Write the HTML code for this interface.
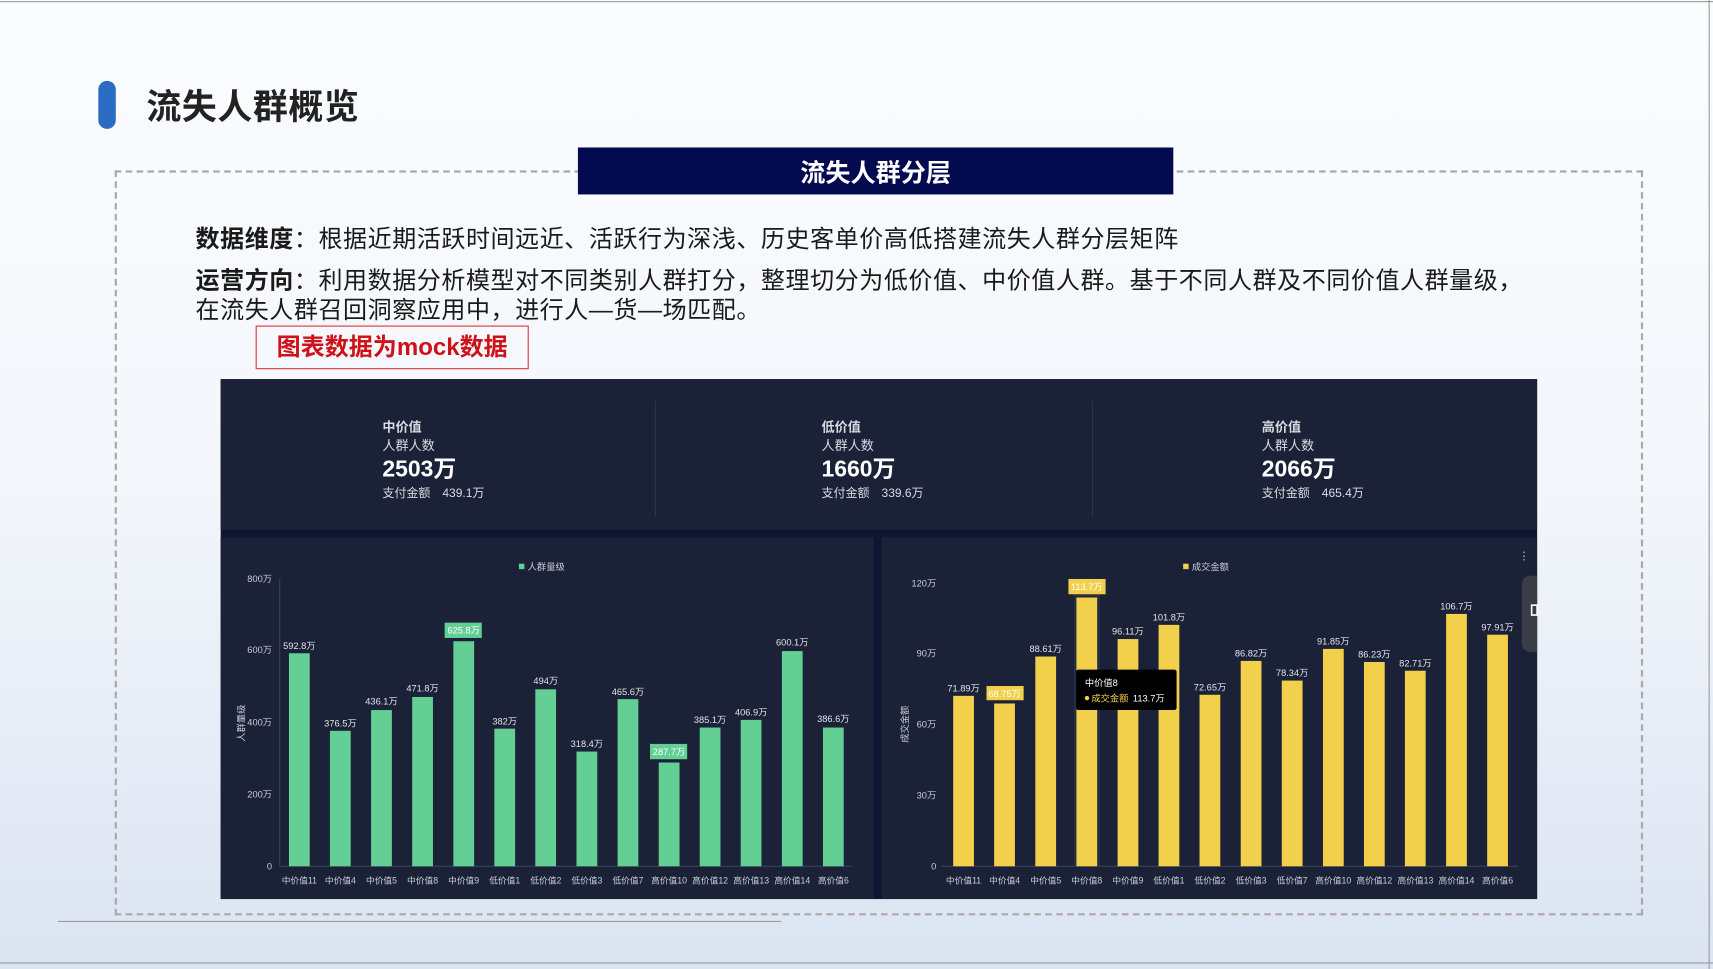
<!DOCTYPE html>
<html><head><meta charset="utf-8"><style>
html,body{margin:0;padding:0;width:1713px;height:969px;overflow:hidden;background:#fff}
#w{position:absolute;left:0;top:0;width:1568px;height:887px;transform:scale(1.09247,1.0924);transform-origin:0 0;
background:linear-gradient(#fbfcfe 0%,#f3f6fb 50%,#dbe4f2 100%);font-family:"Liberation Sans","Noto Sans CJK SC",sans-serif;overflow:hidden}
.a{position:absolute}
.t{font-size:22px;color:#1a1a1a;letter-spacing:0.5px;white-space:nowrap}
</style></head><body><div id="w">
<div class="a" style="left:0;top:1px;width:1568px;height:1px;background:#9a9a9a"></div>
<div class="a" style="left:1564px;top:0;width:1px;height:887px;background:#9a9a9a"></div>
<div class="a" style="left:0;top:881px;width:1568px;height:1px;background:#9a9a9a"></div>
<div class="a" style="left:90px;top:74px;width:16px;height:44px;border-radius:8px;background:#2a6cc4"></div>
<div class="a" style="left:134px;top:73px;font-size:32px;font-weight:bold;color:#222;letter-spacing:0.5px">流失人群概览</div>
<div class="a" style="left:105px;top:156px;width:1395px;height:678px;border:2px dashed #a9a9a9"></div>
<div class="a" style="left:529px;top:135px;width:545px;height:43px;background:#030a50;color:#fff;font-size:23px;font-weight:bold;text-align:center;line-height:46px">流失人群分层</div>
<div class="a t" style="left:179px;top:201px"><b>数据维度</b>：根据近期活跃时间远近、活跃行为深浅、历史客单价高低搭建流失人群分层矩阵</div>
<div class="a t" style="left:179px;top:239px"><b>运营方向</b>：利用数据分析模型对不同类别人群打分，整理切分为低价值、中价值人群。基于不同人群及不同价值人群量级，</div>
<div class="a t" style="left:179px;top:266px">在流失人群召回洞察应用中，进行人—货—场匹配。</div>
<div class="a" style="left:234px;top:298px;width:248px;height:38px;border:1.5px solid #d33;color:#d0111a;font-size:22px;font-weight:bold;line-height:38px;text-align:center">图表数据为mock数据</div>
<div class="a" style="left:53px;top:843px;width:662px;height:1px;background:#999"></div>
<svg class="a" style="left:0;top:0" width="1568" height="887" font-family="Liberation Sans,Noto Sans CJK SC,sans-serif">
<rect x="202" y="347" width="1205" height="476" fill="#0f1631"/>
<rect x="202" y="347" width="1205" height="138" fill="#1b2238"/>
<rect x="202" y="492" width="598" height="331" fill="#1b2238"/>
<rect x="807" y="492" width="600" height="331" fill="#1b2238"/>
<line x1="600" y1="367" x2="600" y2="473" stroke="#2c344b"/>
<line x1="1000" y1="367" x2="1000" y2="473" stroke="#2c344b"/>
<g fill="#d8dbe2">
<text x="350" y="395" font-size="12" font-weight="bold">中价值</text><text x="350" y="412" font-size="12">人群人数</text>
<text x="350" y="436" font-size="21" font-weight="bold" fill="#fff">2503万</text><text x="350" y="455" font-size="11">支付金额　439.1万</text>
<text x="752" y="395" font-size="12" font-weight="bold">低价值</text><text x="752" y="412" font-size="12">人群人数</text>
<text x="752" y="436" font-size="21" font-weight="bold" fill="#fff">1660万</text><text x="752" y="455" font-size="11">支付金额　339.6万</text>
<text x="1155" y="395" font-size="12" font-weight="bold">高价值</text><text x="1155" y="412" font-size="12">人群人数</text>
<text x="1155" y="436" font-size="21" font-weight="bold" fill="#fff">2066万</text><text x="1155" y="455" font-size="11">支付金额　465.4万</text>
</g>
<g font-size="8.5" fill="#c8ccd6">
<rect x="475" y="516" width="5" height="5" fill="#63cf95"/><text x="483" y="522">人群量级</text>
<g text-anchor="end"><text x="249" y="533">800万</text><text x="249" y="598">600万</text><text x="249" y="664">400万</text><text x="249" y="730">200万</text><text x="249" y="796">0</text></g>
<text transform="translate(224,662) rotate(-90)" text-anchor="middle">人群量级</text>
<line x1="256" y1="530" x2="256" y2="793" stroke="#3a4258"/><line x1="256" y1="793" x2="780" y2="793" stroke="#3a4258"/>
<g fill="#63cf95">
<rect x="264.5" y="598" width="19" height="195"/><rect x="302" y="669" width="19" height="124"/><rect x="339.7" y="650" width="19" height="143"/><rect x="377.3" y="638" width="19" height="155"/><rect x="415" y="587" width="19" height="206"/><rect x="452.5" y="667" width="19" height="126"/><rect x="490" y="631" width="19" height="162"/><rect x="527.7" y="688" width="19" height="105"/><rect x="565.3" y="640" width="19" height="153"/><rect x="603" y="698" width="19" height="95"/><rect x="640.5" y="666" width="19" height="127"/><rect x="678" y="659" width="19" height="134"/><rect x="715.7" y="596" width="19" height="197"/><rect x="753.3" y="666" width="19" height="127"/>
<rect x="407" y="570" width="34" height="14"/><rect x="595" y="681" width="34" height="14"/>
</g>
<g text-anchor="middle" fill="#e0e3ea">
<text x="274" y="594">592.8万</text><text x="311.6" y="665">376.5万</text><text x="349.2" y="645">436.1万</text><text x="386.8" y="633">471.8万</text><text x="424.4" y="580" fill="#fff">625.8万</text><text x="462" y="663">382万</text><text x="499.6" y="626">494万</text><text x="537.2" y="684">318.4万</text><text x="574.8" y="636">465.6万</text><text x="612.4" y="691" fill="#fff">287.7万</text><text x="650" y="662">385.1万</text><text x="687.6" y="655">406.9万</text><text x="725.2" y="591">600.1万</text><text x="762.8" y="661">386.6万</text>
</g>
<g text-anchor="middle" font-size="8">
<text x="274" y="809">中价值11</text><text x="311.6" y="809">中价值4</text><text x="349.2" y="809">中价值5</text><text x="386.8" y="809">中价值8</text><text x="424.4" y="809">中价值9</text><text x="462" y="809">低价值1</text><text x="499.6" y="809">低价值2</text><text x="537.2" y="809">低价值3</text><text x="574.8" y="809">低价值7</text><text x="612.4" y="809">高价值10</text><text x="650" y="809">高价值12</text><text x="687.6" y="809">高价值13</text><text x="725.2" y="809">高价值14</text><text x="762.8" y="809">高价值6</text>
</g>
</g>
<g font-size="8.5" fill="#c8ccd6">
<rect x="1083" y="516" width="5" height="5" fill="#f2d04b"/><text x="1091" y="522">成交金额</text>
<text x="1390" y="512" font-size="10">⋮</text>
<g text-anchor="end"><text x="857" y="537">120万</text><text x="857" y="601">90万</text><text x="857" y="666">60万</text><text x="857" y="731">30万</text><text x="857" y="796">0</text></g>
<text transform="translate(831,663) rotate(-90)" text-anchor="middle">成交金额</text>
<line x1="862" y1="793" x2="1390" y2="793" stroke="#3a4258"/>
<rect x="983" y="530" width="24" height="263" fill="#252d45"/>
<g fill="#f2d04b">
<rect x="872.5" y="637" width="19" height="156"/><rect x="910" y="644" width="19" height="149"/><rect x="947.7" y="601" width="19" height="192"/><rect x="985.3" y="547" width="19" height="246"/><rect x="1023" y="585" width="19" height="208"/><rect x="1060.5" y="572" width="19" height="221"/><rect x="1098" y="636" width="19" height="157"/><rect x="1135.7" y="605" width="19" height="188"/><rect x="1173.3" y="623" width="19" height="170"/><rect x="1211" y="594" width="19" height="199"/><rect x="1248.5" y="606" width="19" height="187"/><rect x="1286" y="614" width="19" height="179"/><rect x="1323.7" y="562" width="19" height="231"/><rect x="1361.3" y="581" width="19" height="212"/>
<rect x="978" y="530" width="34" height="14"/><rect x="903" y="628" width="34" height="13"/>
</g>
<g text-anchor="middle" fill="#e0e3ea">
<text x="882" y="633">71.89万</text><text x="919.6" y="638" fill="#fff">68.75万</text><text x="957.2" y="597">88.61万</text><text x="994.8" y="540" fill="#fff">113.7万</text><text x="1032.4" y="581">96.11万</text><text x="1070" y="568">101.8万</text><text x="1107.6" y="632">72.65万</text><text x="1145.2" y="601">86.82万</text><text x="1182.8" y="619">78.34万</text><text x="1220.4" y="590">91.85万</text><text x="1258" y="602">86.23万</text><text x="1295.6" y="610">82.71万</text><text x="1333.2" y="558">106.7万</text><text x="1370.8" y="577">97.91万</text>
</g>
<g text-anchor="middle" font-size="8">
<text x="882" y="809">中价值11</text><text x="919.6" y="809">中价值4</text><text x="957.2" y="809">中价值5</text><text x="994.8" y="809">中价值8</text><text x="1032.4" y="809">中价值9</text><text x="1070" y="809">低价值1</text><text x="1107.6" y="809">低价值2</text><text x="1145.2" y="809">低价值3</text><text x="1182.8" y="809">低价值7</text><text x="1220.4" y="809">高价值10</text><text x="1258" y="809">高价值12</text><text x="1295.6" y="809">高价值13</text><text x="1333.2" y="809">高价值14</text><text x="1370.8" y="809">高价值6</text>
</g>
<rect x="985" y="613" width="92" height="37" rx="2" fill="#000"/>
<text x="993" y="628" fill="#fff" font-size="8.5">中价值8</text>
<circle cx="995" cy="639" r="2" fill="#f2d04b"/>
<text x="999" y="642" fill="#f2d04b" font-size="8.5">成交金额</text><text x="1037" y="642" fill="#fff" font-size="8.5">113.7万</text>
</g>
<path d="M1407 527 H1401 A8 8 0 0 0 1393 535 V589 A8 8 0 0 0 1401 597 H1407 Z" fill="#3a3d45"/>
<rect x="1402" y="554" width="5" height="9" fill="none" stroke="#fff" stroke-width="1.5"/>
</svg>
</div></body></html>
